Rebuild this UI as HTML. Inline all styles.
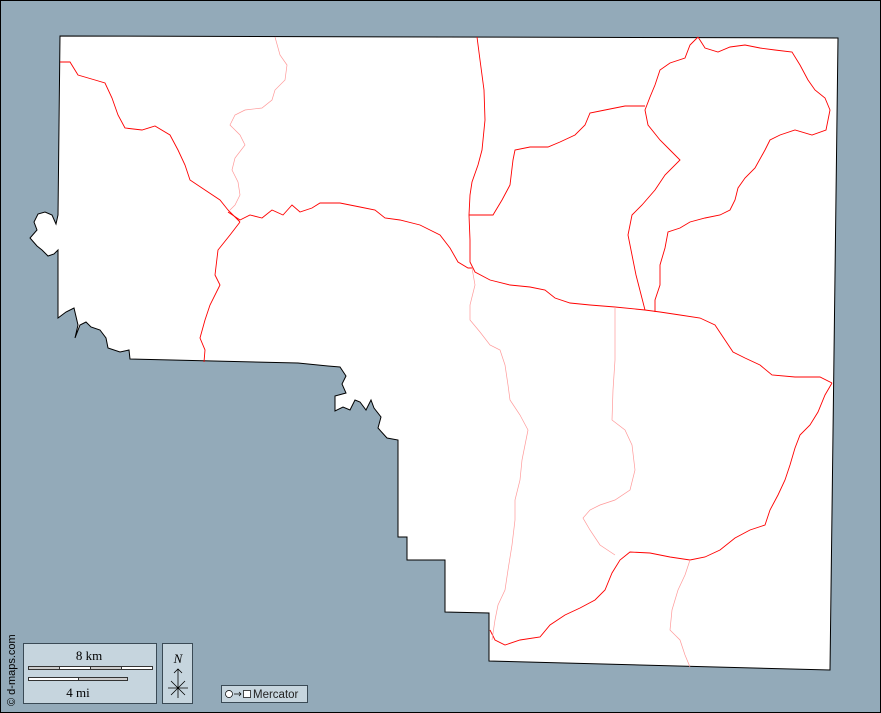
<!DOCTYPE html>
<html><head><style>
html,body{margin:0;padding:0;background:#93aab9;}
svg{display:block}
</style></head><body>
<svg width="881" height="713" viewBox="0 0 881 713" xmlns="http://www.w3.org/2000/svg">
<rect x="0.5" y="0.5" width="880" height="712" fill="#93aab9" stroke="#000" stroke-width="1"/>
<path d="M60,36 L838,38 L830,670 L489,661 L489,613 L445,612 L445,560 L407,560 L407,537 L398,537 L398,440 L387,438 L378,428 L381,417 L374,408 L371,400 L366,410 L360,402 L355,400 L350,410 L343,407 L335,411 L335,396 L346,393 L342,384 L346,376 L340,367 L328,366 L298,363 L130,359 L129,350 L120,352 L108,348 L106,338 L100,330 L91,327 L86,322 L80,325 L75,338 L78,325 L74,308 L66,312 L58,318 L58,250 L54,254 L48,256 L42,250 L37,246 L30,238 L37,230 L34,222 L38,214 L45,212 L52,215 L56,224 L58,215 Z" fill="#fff" stroke="#000" stroke-width="1"/>
<g fill="none" stroke="#ff0000" stroke-width="0.9">
<path d="M60,62 L70,62 L78,75 L95,80 L105,83 L112,98 L118,115 L125,128 L142,130 L155,126 L170,135 L178,150 L185,165 L190,180 L205,190 L220,200 L228,210 L240,222"/>
<path d="M240,222 L230,235 L218,250 L215,275 L220,285 L210,305 L205,320 L200,338 L205,350 L204,362"/>
<path d="M228,212 L240,220 L250,215 L262,218 L272,210 L283,215 L292,205 L300,212 L312,208 L320,203 L340,203 L360,207 L375,210 L385,218 L400,220 L420,225 L440,235 L450,248 L458,262 L468,268 L472,268"/>
<path d="M477,37 L480,60 L484,90 L485,120 L482,150 L478,165 L472,182 L470,195 L469,215 L470,240 L470,262 L475,272 L490,280 L510,285 L530,287 L545,290 L555,298 L570,303 L590,305 L615,307 L645,310"/>
<path d="M469,215 L493,215 L502,200 L510,185 L513,160 L515,150 L530,147 L548,147 L560,142 L575,135 L585,125 L590,113 L605,110 L625,106 L645,106"/>
<path d="M698,37 L690,45 L685,58 L670,63 L660,70 L655,85 L650,97 L645,110 L648,125 L660,140 L670,150 L680,160 L665,175 L655,190 L642,205 L632,215 L628,235 L632,255 L636,275 L645,310"/>
<path d="M698,37 L705,48 L718,52 L730,47 L745,45 L760,48 L775,50 L792,52 L800,65 L808,80 L815,90 L825,98 L830,110 L826,130 L812,135 L795,130 L780,135 L770,140 L765,150 L755,168 L745,178 L738,188 L735,200 L730,210 L720,215 L705,218 L690,222 L680,228 L668,232 L665,248 L660,265 L660,285 L655,300 L655,312"/>
<path d="M645,310 L660,312 L680,315 L700,318 L715,325 L725,340 L733,352 L745,358 L760,365 L772,375 L795,377 L820,377 L832,383"/>
<path d="M832,383 L825,395 L818,412 L810,425 L800,435 L795,448 L790,465 L785,480 L778,495 L770,510 L765,525 L750,530 L735,538 L720,550 L705,557 L690,560 L670,557 L650,553 L630,552 L620,560 L612,573 L605,590 L595,600 L580,608 L565,615 L550,625 L540,637 L520,640 L505,645 L495,640 L490,630"/>
</g>
<g fill="none" stroke="#ff9999" stroke-width="0.7">
<path d="M275,37 L280,55 L287,65 L285,80 L275,90 L272,100 L262,108 L245,110 L235,115 L230,125 L240,135 L245,145 L235,158 L232,170 L238,182 L240,195 L235,205 L230,210"/>
<path d="M472,268 L475,285 L470,305 L470,320 L480,332 L490,345 L500,350 L505,365 L508,385 L510,400 L520,415 L528,430 L525,445 L522,460 L520,480 L515,500 L515,520 L512,545 L508,570 L505,590 L498,605 L495,620 L492,640"/>
<path d="M615,307 L615,330 L615,360 L613,390 L612,420 L625,430 L632,445 L635,470 L630,490 L615,500 L600,505 L590,510 L583,518 L590,530 L600,545 L615,555"/>
<path d="M690,560 L685,575 L678,590 L672,610 L670,630 L680,640 L685,655 L690,667"/>
</g>
<text x="15" y="706" transform="rotate(-90 15 706)" font-family="Liberation Sans,sans-serif" font-size="11" fill="#000">© d-maps.com</text>
<rect x="23.5" y="643.5" width="133" height="60" fill="#c6d5de" stroke="#3a4a55"/>
<text x="89" y="660" text-anchor="middle" font-family="Liberation Serif,serif" font-size="13">8 km</text>
<rect x="28.5" y="666.5" width="124" height="3" fill="#fff" stroke="#333"/>
<rect x="28.5" y="666.5" width="31" height="3" fill="#ccc" stroke="#333"/>
<rect x="90.5" y="666.5" width="31" height="3" fill="#ccc" stroke="#333"/>
<rect x="28.5" y="677.5" width="99" height="3" fill="#ccc" stroke="#333"/>
<rect x="28.5" y="677.5" width="50" height="3" fill="#fff" stroke="#333"/>
<text x="78" y="697" text-anchor="middle" font-family="Liberation Serif,serif" font-size="13">4 mi</text>
<rect x="162.5" y="643.5" width="30" height="60" fill="#c6d5de" stroke="#3a4a55"/>
<text x="178" y="663" text-anchor="middle" font-family="Liberation Serif,serif" font-style="italic" font-size="13">N</text>
<g stroke="#000" stroke-width="0.8" fill="none">
<path d="M178,669 L178,698 M174,673 L178,669 L182,673 M168,688 L188,688 M171,681 L185,695 M185,681 L171,695"/>
</g>
<rect x="221.5" y="685.5" width="86" height="17" fill="#c6d5de" stroke="#3a4a55"/>
<circle cx="229" cy="694" r="3.5" fill="#fff" stroke="#000" stroke-width="0.7"/>
<path d="M234,694 L241,694 M239,692 L241,694 L239,696" stroke="#000" stroke-width="0.7" fill="none"/>
<rect x="243.5" y="690.5" width="7" height="7" fill="#fff" stroke="#000" stroke-width="0.7"/>
<text x="253" y="698" font-family="Liberation Sans,sans-serif" font-size="11.5" fill="#222">Mercator</text>
</svg>
</body></html>
